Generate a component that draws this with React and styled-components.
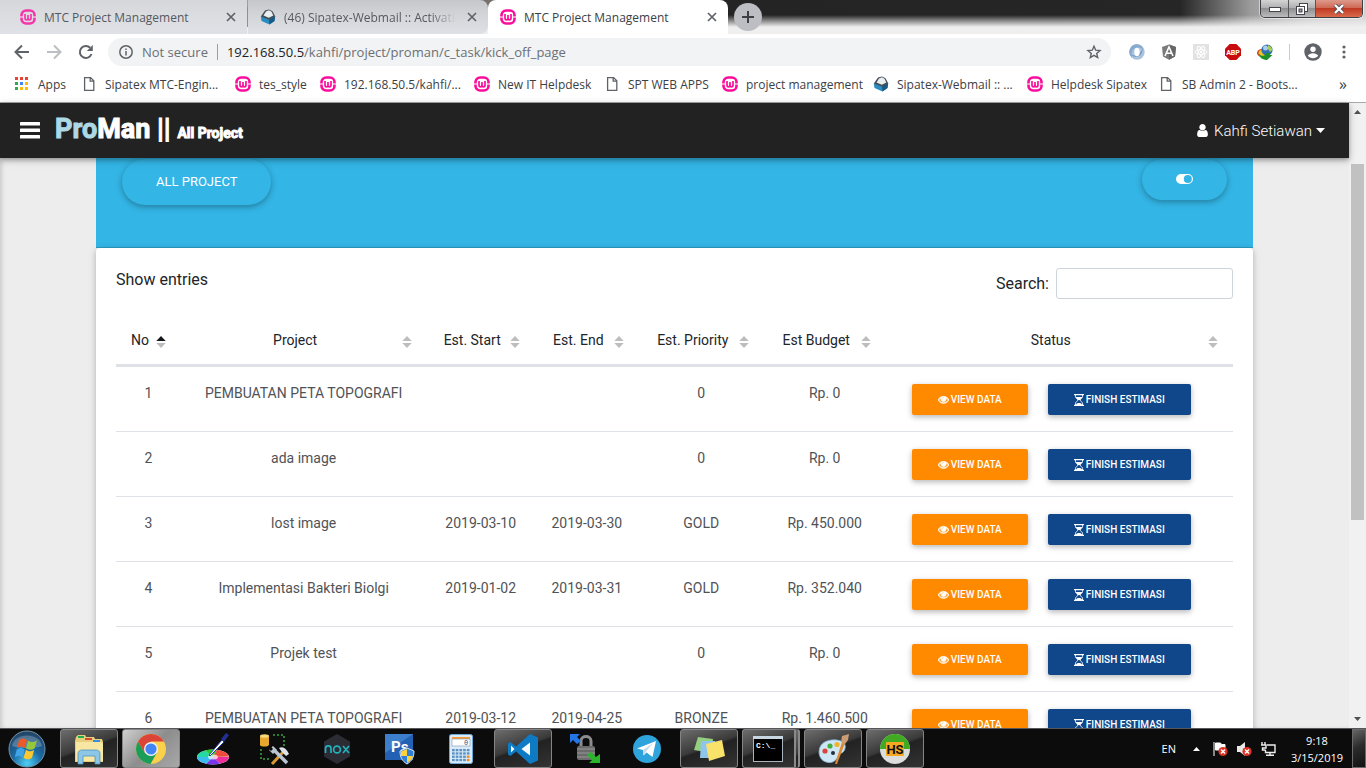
import React from "react";
import styled, { createGlobalStyle, css } from "styled-components";

const GlobalStyle = createGlobalStyle`
  * { box-sizing: border-box; }
  html, body, #root { height: 100%; }
  body { margin: 0; overflow: hidden; font-family: Roboto, sans-serif; }
  button { font-family: inherit; border: 0; margin: 0; padding: 0; background: none; color: inherit; }
  a { color: inherit; text-decoration: none; }
  svg { display: block; flex: none; }
`;

const Desktop = styled.div`
  height: 100vh;
  display: flex;
  flex-direction: column;
  overflow: hidden;
  background: #fff;
`;

/* ---------- Browser chrome ---------- */

const Chrome = styled.header`
  flex: none;
  font-family: "Open Sans", sans-serif;
  font-size: 12px;
  border-bottom: 1px solid #a9a9ab;
`;

const TabStrip = styled.div`
  display: flex;
  height: 34px;
  background:
    linear-gradient(to bottom, transparent 15px, rgba(240, 240, 240, 0.6) 22px, #efefef 27px),
    linear-gradient(to right, #c9cacd 0, #77716c 486px, #242424 726px, #262626 1180px, #9a9a9a 1250px, #c8c8c8 1310px, #d2d2d2 100%);
`;

const Tab = styled.div`
  display: flex;
  align-items: center;
  flex: 0 1 240px;
  min-width: 0;
  gap: 8px;
  padding: 0 8px 0 12px;
  color: ${(p) => (p.$active ? "#3c4043" : "#55585d")};
  background: ${(p) =>
    p.$active ? "#fff" : "linear-gradient(#c6c7cb, #d5d6da 50%, #dfe0e5)"};
  border-radius: ${(p) => (p.$active ? "8px 8px 0 0" : "0 8px 8px 0")};
  ${(p) =>
    p.$first &&
    css`
      flex-basis: 247px;
      padding-left: 20px;
      border-radius: 0;
      background: linear-gradient(#d6d7da, #dcdde1 50%, #e0e1e6);
    `}
`;

const TabDivider = styled.span`
  flex: none;
  width: 1px;
  height: 20px;
  align-self: center;
  background: #8e9094;
`;

const TabTitle = styled.span`
  flex: 1;
  min-width: 0;
  overflow: hidden;
  white-space: nowrap;
  mask-image: ${(p) => (p.$fade ? "linear-gradient(to right, #000 85%, transparent)" : "none")};
`;

const IconButton = styled.button`
  flex: none;
  display: grid;
  place-items: center;
  width: ${(p) => p.$size || 16}px;
  height: ${(p) => p.$size || 16}px;
  color: ${(p) => p.$color || "#5f6368"};
`;

const NewTab = styled.button`
  flex: none;
  display: grid;
  place-items: center;
  width: 28px;
  height: 28px;
  margin: 3px 0 0 6px;
  border-radius: 50%;
  background: #bdbec3;
  color: #3c4043;
`;

const WindowControls = styled.div`
  display: flex;
  height: 18px;
  margin-left: auto;
  margin-right: 3px;
  border: 1px solid #3e3e45;
  border-top: 0;
  border-radius: 0 0 5px 5px;
  overflow: hidden;
  box-shadow: 0 0 0 1px rgba(255, 255, 255, 0.5);
`;

const WindowButton = styled.button`
  display: grid;
  place-items: center;
  width: ${(p) => (p.$close ? 47 : 27)}px;
  border-left: ${(p) => (p.$first ? "0" : "1px solid #55555c")};
  background: ${(p) =>
    p.$close
      ? "linear-gradient(#dd9a8c, #cf6a55 45%, #c03a22 50%, #d96a4a)"
      : "linear-gradient(#d4d4d4, #b0b0b2 45%, #8f8f92 50%, #bcbcbe)"};
`;

const Toolbar = styled.div`
  display: flex;
  align-items: center;
  height: 36px;
  padding: 0 14px;
  background: #fff;
`;

const NavButtons = styled.div`
  display: flex;
  gap: 16px;
  margin-right: 14px;
`;

const AddressBar = styled.form`
  flex: 1;
  display: flex;
  align-items: center;
  height: 28px;
  padding: 0 9px 0 11px;
  border-radius: 14px;
  background: #f1f3f4;
  font-size: 13px;
  color: #6b6f74;
`;

const Secure = styled.span`
  padding: 0 9px;
  margin-right: 9px;
  border-right: 1px solid #9a9da1;
  line-height: 16px;
`;

const Url = styled.span`
  flex: 1;
  white-space: nowrap;
  b { font-weight: 400; color: #202124; }
`;

const Extensions = styled.div`
  display: flex;
  align-items: center;
  gap: 16px;
  margin-left: 18px;
`;

const ToolDivider = styled.span`
  width: 1px;
  height: 16px;
  background: #c9cbce;
`;

const Trailing = styled.div`
  display: flex;
  align-items: center;
  gap: 14px;
  margin-left: 16px;
`;

const Bookmarks = styled.nav`
  display: flex;
  align-items: center;
  height: 32px;
  padding: 0 19px 4px 14px;
  background: #fff;
  color: #3c4043;
`;

const Bookmark = styled.a`
  flex: 0 1 ${(p) => p.$width}px;
  display: flex;
  align-items: center;
  gap: 8px;
  white-space: nowrap;
`;

const Overflow = styled.button`
  margin-left: auto;
  font-size: 16px;
  line-height: 16px;
  color: #3c4043;
`;

/* ---------- Web page ---------- */

const Viewport = styled.div`
  flex: 1;
  min-height: 0;
  display: flex;
`;

const Page = styled.div`
  flex: 1;
  min-width: 0;
  display: flex;
  flex-direction: column;
  background: #ededed;
  color: #212529;
`;

const Navbar = styled.nav`
  flex: none;
  display: flex;
  align-items: center;
  height: 55px;
  padding: 0 24px 0 20px;
  background: #222;
  color: #fff;
  z-index: 1;
  box-shadow: 0 2px 5px rgba(0, 0, 0, 0.3), 0 2px 10px rgba(0, 0, 0, 0.12);
`;

const Brand = styled.a`
  margin-left: 15px;
  font-family: Impact, Roboto, sans-serif;
  font-weight: 700;
  font-size: 27px;
  line-height: 36px;
  -webkit-text-stroke: 1px currentColor;
  span { color: #add8e6; }
  small { font-size: 14px; }
`;

const UserMenu = styled.button`
  display: flex;
  align-items: center;
  gap: 4px;
  margin-left: auto;
  font-size: 15px;
  font-weight: 300;
`;

const Scroller = styled.main`
  flex: 1;
  min-height: 0;
  overflow: hidden;
  padding: 0 96px;
  box-shadow: inset 3px 0 4px -1px rgba(0, 0, 0, 0.15);
`;

const Hero = styled.section`
  display: flex;
  justify-content: space-between;
  align-items: flex-start;
  height: 90px;
  padding: 1px 26px;
  background: #33b5e5;
  border-bottom: 1px solid #2b9ac3;
`;

const Pill = styled.button`
  display: grid;
  place-items: center;
  height: ${(p) => (p.$small ? 41 : 46)}px;
  padding: 0 34px 2px;
  border-radius: 24px;
  color: #fff;
  font-size: 13px;
  text-transform: uppercase;
  box-shadow: 0 2px 5px rgba(0, 0, 0, 0.2), 0 2px 8px rgba(0, 0, 0, 0.12);
`;

const Card = styled.section`
  padding: 20px;
  background: #fff;
  border-radius: 4px;
  box-shadow: 0 2px 5px rgba(0, 0, 0, 0.16), 0 2px 10px rgba(0, 0, 0, 0.12);
`;

const Controls = styled.div`
  display: flex;
  justify-content: space-between;
  font-size: 16px;
  line-height: 24px;
`;

const SearchLabel = styled.label`
  display: flex;
  align-items: center;
  gap: 7px;
`;

const SearchInput = styled.input`
  width: 177px;
  height: 31px;
  padding: 4px 8px;
  border: 1px solid #ced4da;
  border-radius: 3px;
  font: 400 14px Roboto, sans-serif;
`;

const DataTable = styled.table`
  width: 100%;
  margin-top: 15px;
  table-layout: fixed;
  border-collapse: separate;
  border-spacing: 0;
  font-size: 14px;
  line-height: 20px;
  text-align: center;
`;

const HeadCell = styled.th`
  width: ${(p) => p.$width};
  height: 53px;
  padding: 1px 15px 0 12px;
  border-bottom: 3px solid #dee2e6;
  font-weight: 400;
`;

const SortButton = styled.button`
  width: 100%;
  display: grid;
  grid-template-columns: 1fr auto;
  align-items: center;
  gap: 4px;
  font-size: 14px;
  line-height: 20px;
  white-space: nowrap;

  svg { margin-top: 4px; }
`;

const Cell = styled.td`
  height: 65px;
  padding: 16px 0;
  vertical-align: top;
  border-bottom: 1px solid #dee2e6;
  color: #505356;
  white-space: nowrap;
`;

const Actions = styled.div`
  display: flex;
  justify-content: center;
  gap: 20px;
  padding: 1px 16px 0 0;
`;

const ActionButton = styled.button`
  display: flex;
  align-items: center;
  justify-content: center;
  gap: 2px;
  min-width: ${(p) => (p.$primary ? 143 : 116)}px;
  height: 31px;
  border-radius: 2px;
  background: ${(p) => (p.$primary ? "#10478a" : "#ff8a00")};
  color: #fff;
  font-size: 10px;
  font-weight: 500;
  text-transform: uppercase;
  box-shadow: 0 2px 5px rgba(0, 0, 0, 0.2), 0 2px 8px rgba(0, 0, 0, 0.1);
`;

const Scrollbar = styled.div`
  flex: none;
  display: flex;
  flex-direction: column;
  align-items: center;
  width: 17px;
  background: #f1f1f1;
  padding: 7px 0;
`;

const Thumb = styled.span`
  width: 13px;
  flex: 0 1 356px;
  margin: 50px 2px auto;
  background: #c1c1c1;
`;

/* ---------- Taskbar ---------- */

const Taskbar = styled.footer`
  flex: none;
  display: flex;
  align-items: stretch;
  height: 40px;
  border-top: 1px solid #55575a;
  background: #0c0c0c;
  color: #fff;
  font-family: "Open Sans", sans-serif;
  font-size: 12px;
  z-index: 2;
`;

const StartButton = styled.button`
  width: 54px;
  display: grid;
  place-items: center;
  margin-right: 6px;
`;

const TaskList = styled.div`
  display: flex;
  gap: 4px;
`;

const TaskButton = styled.button`
  display: grid;
  place-items: center;
  width: 58px;
  border-radius: 3px;
  border: 1px solid ${(p) => (p.$open ? "#858585" : "transparent")};
  background: ${(p) =>
    p.$front
      ? "linear-gradient(135deg, #d0d0d0, #8d8d8d 50%, #a8a8a8)"
      : p.$open
      ? "linear-gradient(160deg, #6d6d6d, #3a3a3a 45%, #222 50%, #333)"
      : "none"};
  ${(p) => p.$stack && css`
    padding-right: 2px;
    border-right: 6px double #8a8a8a;
  `}
`;

const Tray = styled.div`
  display: flex;
  align-items: center;
  margin-left: auto;
  gap: 8px;
`;

const Language = styled.span`
  margin-right: 4px;
  font-size: 11px;
  line-height: 16px;
`;

const Clock = styled.time`
  width: 54px;
  margin-left: 6px;
  text-align: center;
  font-size: 11px;
  line-height: 17px;
`;

const ShowDesktop = styled.button`
  align-self: stretch;
  width: 14px;
  border: 1px solid #6a6a6a;
  background: linear-gradient(150deg, #666, #2c2c2c 45%, #111);
`;

/* ---------- Icons ---------- */

const WIcon = ({ dim }) => (
  <svg width="16" height="16" viewBox="0 0 16 16" fill="none" opacity={dim ? 0.8 : 1}>
    <rect x="1.500" y="1.500" width="13" height="13" rx="4.600" stroke="#fb0d9c" strokeWidth="2.600" />
    <path d="M0 8h3.400M12.600 8H16" stroke="#fff" strokeWidth="1" />
    <path d="M5 5v4c0 2.400 3 2.400 3 0V6v3c0 2.400 3 2.400 3 0V5" stroke="#fb0d9c" strokeWidth="1.700" />
  </svg>
);

const MailIcon = () => (
  <svg width="16" height="16" viewBox="0 0 16 16">
    <path d="M.8 7.500L8 6l7.200 1.500L14.500 12l-5 3.600L1.500 12z" fill="#2b8cc2" />
    <path d="M9 10.500l6.200-3.500-.7 5-5 3.600z" fill="#175a85" />
    <path d="M.8 7.500L5 1.500 9 .4l3.500 1.800 2.700 5-6 3.600z" fill="#454f57" />
    <path d="M3.500 6.500L6 2.500 9 1.300l2.500 1.500 1.800 3.700-4.500 2.300z" fill="#e8eef2" />
  </svg>
);

const FileIcon = () => (
  <svg width="16" height="16" viewBox="0 0 16 16" fill="none" stroke="#5f6368" strokeWidth="1.300">
    <path d="M3.600 1.600h6l3.200 3.200v9.600H3.600zM9.200 1.600v3.600h3.600" />
  </svg>
);

const AppsIcon = () => {
  const colors = ["#ea4335", "#ea4335", "#ea4335", "#34a853", "#4285f4", "#fbbc05", "#34a853", "#fbbc05", "#fbbc05"];
  return (
    <svg width="16" height="16" viewBox="0 0 16 16">
      {colors.map((c, i) => (
        <rect key={i} x={1 + (i % 3) * 5} y={1 + Math.floor(i / 3) * 5} width="3" height="3" fill={c} />
      ))}
    </svg>
  );
};

const Stroke = ({ d, size = 16, width = 2 }) => (
  <svg width={size} height={size} viewBox="0 0 16 16" fill="none" stroke="currentColor" strokeWidth={width}>
    <path d={d} />
  </svg>
);

const Reload = () => (
  <svg width="16" height="16" viewBox="0 0 16 16" fill="none">
    <path d="M13.500 10A6 6 0 1 1 12.200 3.800" stroke="currentColor" strokeWidth="2" />
    <path d="M14.800 1v6H8.800z" fill="currentColor" />
  </svg>
);

const InfoIcon = () => (
  <svg width="14" height="14" viewBox="0 0 14 14" fill="none" stroke="#5f6368" strokeWidth="1.500">
    <circle cx="7" cy="7" r="6.200" />
    <path d="M7 6v4.500M7 3.400v1.500" />
  </svg>
);

const Star = () => (
  <svg width="16" height="16" viewBox="0 0 16 16" fill="none" stroke="currentColor" strokeWidth="1.400">
    <path d="M8 2.200l1.700 4 4.300.4-3.300 2.800 1 4.200L8 11.400l-3.700 2.200 1-4.200L2 6.600l4.300-.4z" />
  </svg>
);

const Swirl = () => (
  <svg width="16" height="16" viewBox="0 0 16 16">
    <circle cx="8" cy="8" r="7.700" fill="#a9c3dd" />
    <path d="M8 .3A7.700 7.700 0 0 0 3 13.800C1.500 8 4 3.500 9 3.500c3 0 4.500 1 5.500 2.500A7.700 7.700 0 0 0 8 .3z" fill="#86a9cd" />
    <path d="M13 2.200c1.500 6-1 10.500-6 10.500-3 0-4.500-1-5.500-2.500A7.700 7.700 0 0 0 13 2.200z" fill="#5f8ab9" opacity=".75" />
    <ellipse cx="8" cy="8" rx="2.700" ry="4.300" fill="#fff" />
  </svg>
);

const Angular = () => (
  <svg width="16" height="16" viewBox="0 0 16 16">
    <path d="M8 .5l7 2.500-1 9.500-6 3.300-6-3.300L1 3z" fill="#7b7b7b" />
    <path d="M8 .5l7 2.500-1 9.500-6 3.300z" fill="#666" />
    <path d="M4 12L8 3l4 9M5.500 9.200h5" stroke="#fff" strokeWidth="1.600" fill="none" />
  </svg>
);

const ReactLogo = () => (
  <svg width="16" height="16" viewBox="0 0 16 16" fill="none">
    <rect width="16" height="16" fill="#e2e2e2" />
    <g stroke="#fff">
      <ellipse cx="8" cy="8" rx="6" ry="2.400" />
      <ellipse cx="8" cy="8" rx="6" ry="2.400" transform="rotate(60 8 8)" />
      <ellipse cx="8" cy="8" rx="6" ry="2.400" transform="rotate(120 8 8)" />
    </g>
    <circle cx="8" cy="8" r="1.200" fill="#fff" />
  </svg>
);

const Abp = () => (
  <svg width="16" height="16" viewBox="0 0 16 16">
    <path d="M4.700 0h6.600L16 4.700v6.600L11.300 16H4.700L0 11.300V4.700z" fill="#c70d0d" />
    <text x="8" y="10.600" fontSize="7" fontWeight="700" fontFamily="Roboto, sans-serif" fill="#fff" textAnchor="middle">ABP</text>
  </svg>
);

const Idm = () => (
  <svg width="16" height="16" viewBox="0 0 16 16">
    <ellipse cx="5" cy="9" rx="5" ry="4" fill="#cf3a1f" />
    <ellipse cx="6" cy="9" rx="4.500" ry="3.300" fill="#f0c52a" />
    <circle cx="10" cy="6" r="5.600" fill="#2f6fb5" />
    <circle cx="8.500" cy="4" r="2.500" fill="#a8cdee" />
    <path d="M11 1l3 2 1.500 3-2.500 2-2-3z" fill="#a9cf55" />
    <path d="M1.500 9c2 3 5 3.500 7 2V9h4v2h3l-5.500 5c-4 0-7.500-2-8.500-7z" fill="#1d9128" />
  </svg>
);

const Avatar = () => (
  <svg width="18" height="18" viewBox="0 0 18 18">
    <circle cx="9" cy="9" r="8.700" fill="#5f6368" />
    <circle cx="9" cy="6.300" r="2.700" fill="#fff" />
    <path d="M3.800 12.800c1.500-3.400 8.900-3.400 10.400 0-2.400 3.300-8 3.300-10.400 0z" fill="#fff" />
  </svg>
);

const Dots = () => (
  <svg width="16" height="16" viewBox="0 0 16 16" fill="#5f6368">
    <circle cx="8" cy="3" r="1.600" /><circle cx="8" cy="8" r="1.600" /><circle cx="8" cy="13" r="1.600" />
  </svg>
);

const Bars = () => (
  <svg width="20" height="17" viewBox="0 0 20 17" fill="#fff">
    <rect y="0" width="20" height="3.500" rx=".5" /><rect y="6.500" width="20" height="3.500" rx=".5" /><rect y="13" width="20" height="3.500" rx=".5" />
  </svg>
);

const UserIcon = () => (
  <svg width="15" height="15" viewBox="0 0 1792 1792" fill="currentColor">
    <path d="M1536 1399q0 109-62.500 187t-150.500 78h-854q-88 0-150.500-78t-62.500-187q0-85 8.500-160.500t31.500-152 58.500-131 94-89 134.500-34.500q131 128 313 128t313-128q76 0 134.500 34.500t94 89 58.500 131 31.500 152 8.500 160.500zm-256-887q0 159-112.500 271.500t-271.500 112.500-271.500-112.500-112.500-271.500 112.500-271.500 271.500-112.500 271.500 112.500 112.500 271.500z" />
  </svg>
);

const Caret = () => (
  <svg width="9" height="5" viewBox="0 0 9 5" fill="currentColor"><path d="M0 0h9L4.500 5z" /></svg>
);

const ToggleIcon = () => (
  <svg width="17" height="10" viewBox="0 0 17 10">
    <path fillRule="evenodd" fill="#fff" d="M5 0h7a5 5 0 0 1 0 10H5A5 5 0 0 1 5 0zM11.800 1a4 4 0 1 0 0 8 4 4 0 0 0 0-8z" />
  </svg>
);

const EyeIcon = () => (
  <svg width="11" height="11" viewBox="0 0 1792 1792" fill="currentColor" stroke="currentColor" strokeWidth="90">
    <path d="M1664 960q-152-236-381-353 61 104 61 225 0 185-131.500 316.500t-316.500 131.500-316.500-131.500-131.500-316.500q0-121 61-225-229 117-381 353 133 205 333.500 326.500t434.500 121.500 434.500-121.500 333.500-326.500zm-720-384q0-20-14-34t-34-14q-125 0-214.500 89.500t-89.500 214.500q0 20 14 34t34 14 34-14 14-34q0-86 61-147t147-61q20 0 34-14t14-34zm848 384q0 34-20 69-140 230-376.500 368.500t-499.500 138.500-499.500-139-376.500-368q-20-35-20-69t20-69q140-229 376.500-368t499.500-139 499.500 139 376.500 368q20 35 20 69z" />
  </svg>
);

const HourglassIcon = () => (
  <svg width="10" height="12" viewBox="0 0 10 12">
    <path d="M0 0h10v1.300H0zM0 10.700h10V12H0z" fill="#fff" />
    <path d="M1.500 1v1.500C1.500 4.500 4 5 4 6s-2.500 1.500-2.500 3.500V11M8.500 1v1.500C8.500 4.500 6 5 6 6s2.500 1.500 2.500 3.500V11" fill="none" stroke="#fff" strokeWidth=".9" />
    <path d="M1.500 3h7L6 6H4z" fill="#fff" />
    <path d="M2 11c0-1.500 1.500-2 3-2s3 .5 3 2z" fill="#fff" />
  </svg>
);

const SortIcon = ({ up }) => (
  <svg width="10" height="12" viewBox="0 0 10 12">
    <path d="M5 0l4.700 5H.3z" fill={up ? "#15181b" : "#bdbdbd"} />
    <path d="M5 12l4.700-5H.3z" fill="#bdbdbd" />
  </svg>
);

const Art = ({ children }) => (
  <svg width="32" height="32" viewBox="0 0 32 32">{children}</svg>
);

const StartOrb = () => (
  <svg width="38" height="38" viewBox="0 0 38 38">
    <defs>
      <radialGradient id="orb" cx=".5" cy=".9" r=".9">
        <stop offset="0" stopColor="#4fd0f5" /><stop offset=".45" stopColor="#1b6ba5" /><stop offset="1" stopColor="#23415f" />
      </radialGradient>
    </defs>
    <circle cx="19" cy="19" r="18" fill="url(#orb)" stroke="#7394ac" strokeWidth="1" />
    <path d="M4 16C6 2 32 2 34 16c-9 3-21 3-30 0z" fill="#fff" opacity=".22" />
    <path d="M11 10c3-2 5-2 8 0l-2 8c-3-2-5-2-8 0z" fill="#ea5a2a" />
    <path d="M20 10.500c3 2 5 2 9 0l-2.500 8c-3 2-5 1.500-8.500-.3z" fill="#93c83e" />
    <path d="M8.700 19.500c3-2 5-2 8 0l-2 8c-3-2-5-2-8 0z" fill="#3fa4e6" />
    <path d="M18 19.700c3 2 5 2 8.200 0l-2.200 8c-3 2-5 2-8.500 0z" fill="#fbc832" />
  </svg>
);

const Explorer = () => (
  <Art>
    <path d="M3 4l2-2h7l1 2h8l1 2h7l1 3v20H2V8z" fill="#e8cf7d" />
    <path d="M5 3h6v2H5z" fill="#1fae4a" /><path d="M12 5h7v2h-7z" fill="#d5482e" /><path d="M20 7h7v2h-7z" fill="#3b8fd6" />
    <path d="M3 9h25l2 2v17H3z" fill="#f7e7a3" />
    <path d="M5 31V21c0-3 2-4 4-4h14c2 0 4 1 4 4v10h-5v-8H10v8z" fill="#8cc7e8" stroke="#4c93bd" strokeWidth=".8" />
  </Art>
);

const ChromeIcon = () => (
  <Art>
    <circle cx="16" cy="16" r="15" fill="#fbd04b" />
    <path d="M3 8.500A15 15 0 0 0 15.500 31L22 19.500 16 16 9.500 19.500z" fill="#1a9d59" />
    <path d="M3 8.500A15 15 0 0 1 29 8.500H16L9.500 19.500z" fill="#db4437" />
    <circle cx="16" cy="16" r="7" fill="#f1f1f1" /><circle cx="16" cy="16" r="5.600" fill="#4285f4" />
  </Art>
);

const ColorWheel = () => (
  <Art>
    <ellipse cx="16" cy="24" rx="16" ry="7.500" fill="#e8e8e8" />
    <path d="M16 24L0 24A16 7.500 0 0 1 8 17.500z" fill="#25d9a0" /><path d="M16 24L8 17.500a16 7.500 0 0 1 12-.7z" fill="#28c928" />
    <path d="M16 24l4-7.200a16 7.500 0 0 1 12 6.700z" fill="#ef4b3c" /><path d="M16 24l16 0a16 7.500 0 0 1-9 6.600z" fill="#ee2f9b" />
    <path d="M16 24l7 6.600a16 7.500 0 0 1-14 .1z" fill="#7a35e8" /><path d="M16 24l-7 6.600A16 7.500 0 0 1 0 24z" fill="#39bdf1" />
    <ellipse cx="16" cy="24" rx="5" ry="2.500" fill="#fff" opacity=".7" />
    <path d="M12 22L25 7l2 2-14 14z" fill="#fff" stroke="#203a9c" strokeWidth="1" />
    <path d="M24 6l5-6 3 2-5 7z" fill="#23308f" />
  </Art>
);

const DbTools = () => (
  <Art>
    <path d="M1 3v9c0 2 9 2 9 0V3z" fill="#e5a72d" /><ellipse cx="5.500" cy="3" rx="4.500" ry="1.800" fill="#f7d878" />
    <path d="M14 2h11v12M2 16v10h10" fill="none" stroke="#37a13f" strokeWidth="1.600" strokeDasharray="2 2" />
    <path d="M13 31l13-14" stroke="#d99a36" strokeWidth="3" /><path d="M13 15l15 15" stroke="#b9c6d1" strokeWidth="3.500" />
    <path d="M20 15c4-2 7 0 10 6l-3 2-4-4z" fill="#dce4ea" /><path d="M10 17l4-4 4 4-4 4z" fill="#b9c6d1" /><path d="M9 13l4 4" stroke="#0c0c0c" strokeWidth="3" />
  </Art>
);

const Nox = () => (
  <Art>
    <path d="M16 1l13 7.500v15L16 31 3 23.500v-15z" fill="#2b2c34" />
    <path d="M4.500 20v-4.500c0-3.500 5.500-3.500 5.500 0V20M22 13l6 7M28 13l-6 7" fill="none" stroke="#22b1bd" strokeWidth="1.700" />
    <circle cx="16" cy="16.500" r="3.400" fill="none" stroke="#22b1bd" strokeWidth="1.700" />
  </Art>
);

const Photoshop = () => (
  <Art>
    <rect x="2" y="1" width="28" height="26" fill="#2361b4" /><path d="M2 1h28L2 20z" fill="#3d7fcc" />
    <text x="8" y="19" fontSize="15" fontWeight="700" fontFamily="Roboto, sans-serif" fill="#fff">Ps</text>
    <path d="M24 15l7 3c0 6-2 10-7 13-5-3-7-7-7-13z" fill="#2f7ed8" stroke="#dfe5ec" strokeWidth="1" />
    <path d="M24 16v7h6c-1 3-3 5-6 7v-7h-6v-4.500z" fill="#fcd13d" />
  </Art>
);

const Calculator = () => (
  <Art>
    <rect x="4.500" y="1.500" width="23" height="29" rx="2" fill="#d9ebf8" stroke="#6da6d2" />
    <rect x="7" y="4" width="18" height="2" fill="#f59b3a" /><rect x="7" y="6" width="18" height="7" fill="#fff" stroke="#7b98b0" strokeWidth=".6" />
    <text x="19" y="12" fontSize="7" fontFamily="Liberation Mono, monospace" fill="#24507a">0</text>
    {[0, 1, 2, 3].map((r) => [0, 1, 2, 3, 4].map((c) => (
      <rect key={r + "-" + c} x={7 + c * 3.7} y={16 + r * 3.3} width="2.700" height="2.300" fill={c === 4 && r > 1 ? "#f08b1d" : "#5c93c4"} />
    )))}
  </Art>
);

const VsCode = () => (
  <Art>
    <path d="M23 1l8 3.500v23L23 31 9 18.500 3.500 23 1 21.500v-11L3.500 9 9 13.500z" fill="#0e7ac4" />
    <path d="M23 9.500L14.500 16l8.500 6.500zM4 12.500v7L7.500 16z" fill="#f3f8fb" />
  </Art>
);

const LockSync = () => (
  <Art>
    <path d="M12 14V8c0-6 10-6 10 0v6" fill="none" stroke="#8c8c8c" strokeWidth="3" />
    <rect x="8" y="13" width="18" height="14" rx="2" fill="#6b6b6b" /><path d="M8 16h18M8 20h18M8 24h18" stroke="#999" />
    <path d="M1 1h10L8 4l4 4-4 3-4-4-3 3z" fill="#2476e5" />
    <path d="M31 30H20l3-3-5-5 4-3 5 5 4-3z" fill="#2bb52b" />
  </Art>
);

const Telegram = () => (
  <Art>
    <circle cx="16" cy="16" r="14" fill="#2fa3db" />
    <path d="M6 15.500L25 8l-3.500 16-6-4.500-3 3-.5-5.500z" fill="#fff" /><path d="M12 17l10-7-7 8.500-2.500 4z" fill="#c5daea" />
  </Art>
);

const StickyNotes = () => (
  <Art>
    <path d="M5 4l15 2-2 14-17-3z" fill="#93cf7e" /><path d="M8 8h14v17H7z" fill="#8fc5ec" /><path d="M13 11l16-4 3 16-16 5z" fill="#f8e26a" />
  </Art>
);

const Terminal = () => (
  <Art>
    <rect x="1.500" y="3.500" width="29" height="25" fill="#000" stroke="#a9b4be" /><rect x="1" y="3" width="30" height="3" fill="#c8d6e2" />
    <text x="4" y="15" fontSize="8" fontWeight="700" fontFamily="Liberation Mono, monospace" fill="#fff">C:\_</text>
  </Art>
);

const PaintIcon = () => (
  <Art>
    <path d="M2 19C2 9 12 6 20 7c8 1 10 6 7 11-2 3-5 2-6 5-1 5-7 8-12 6-4-1-7-5-7-10z" fill="#cfe6f5" stroke="#7fb0d0" strokeWidth=".8" />
    <circle cx="8" cy="18" r="2.600" fill="#d9453a" /><circle cx="13" cy="13" r="2.600" fill="#48ad3f" /><circle cx="20" cy="11.500" r="2.600" fill="#f0b32e" /><circle cx="16" cy="20" r="2" fill="#20303c" />
    <path d="M18 31l7-22 3 1-8 21z" fill="#dd8a33" /><path d="M24 9l1-6 7-2-1 6-3 4z" fill="#c99c74" />
  </Art>
);

const HsIcon = () => (
  <Art>
    <circle cx="16" cy="16" r="15" fill="#dcdedb" /><path d="M1 16a15 15 0 0 1 30 0z" fill="#3faa22" />
    <rect x="7" y="9" width="18" height="14" rx="1" fill="#f7a823" />
    <text x="16" y="21" fontSize="13" fontWeight="700" fontFamily="Roboto, sans-serif" fill="#111" textAnchor="middle">HS</text>
  </Art>
);

const RedCross = () => (
  <g>
    <circle cx="11" cy="10.500" r="4.600" fill="#dc3325" /><path d="M9 8.500l4 4M13 8.500l-4 4" stroke="#fff" strokeWidth="1.500" />
  </g>
);

const FlagIcon = () => (
  <svg width="16" height="16" viewBox="0 0 16 16"><path d="M2 1v14M3.500 2h5l1 1.500H13V9H3.500z" fill="#fff" stroke="#fff" strokeWidth="1" /><RedCross /></svg>
);

const SpeakerIcon = () => (
  <svg width="16" height="16" viewBox="0 0 16 16"><path d="M1 5h3l5-4v14l-5-4H1z" fill="#e9e9e9" /><RedCross /></svg>
);

const NetworkIcon = () => (
  <svg width="16" height="16" viewBox="0 0 16 16" fill="none" stroke="#eee" strokeWidth="1.400"><path d="M7 4h8v7.500H5.500V9M2 1v3M5 1v3M1 4h5v3H2.500v2h3M10 12v2M6 14.300h8" /></svg>
);

/* ---------- Data ---------- */

const bookmarks = [
  ["Apps", AppsIcon, 67],
  ["Sipatex MTC-Engin...", FileIcon, 154],
  ["tes_style", WIcon, 85],
  ["192.168.50.5/kahfi/...", WIcon, 154],
  ["New IT Helpdesk", WIcon, 130],
  ["SPT WEB APPS", FileIcon, 118],
  ["project management", WIcon, 151],
  ["Sipatex-Webmail :: ...", MailIcon, 154],
  ["Helpdesk Sipatex", WIcon, 131],
  ["SB Admin 2 - Boots...", FileIcon, 140],
];

const columns = [
  ["No", "5.8%"],
  ["Project", "22%"],
  ["Est. Start", "9.7%"],
  ["Est. End", "9.3%"],
  ["Est. Priority", "11.2%"],
  ["Est Budget", "10.9%"],
  ["Status", "31.1%"],
];

const rows = [
  ["1", "PEMBUATAN PETA TOPOGRAFI", "", "", "0", "Rp. 0"],
  ["2", "ada image", "", "", "0", "Rp. 0"],
  ["3", "lost image", "2019-03-10", "2019-03-30", "GOLD", "Rp. 450.000"],
  ["4", "Implementasi Bakteri Biolgi", "2019-01-02", "2019-03-31", "GOLD", "Rp. 352.040"],
  ["5", "Projek test", "", "", "0", "Rp. 0"],
  ["6", "PEMBUATAN PETA TOPOGRAFI", "2019-03-12", "2019-04-25", "BRONZE", "Rp. 1.460.500"],
];

const tasks = [
  ["Explorer", Explorer, "open"],
  ["Chrome", ChromeIcon, "front"],
  ["Color picker", ColorWheel],
  ["Database tools", DbTools],
  ["Nox", Nox],
  ["Photoshop", Photoshop],
  ["Calculator", Calculator],
  ["Code", VsCode, "open"],
  ["Sync", LockSync],
  ["Telegram", Telegram],
  ["Sticky Notes", StickyNotes, "open"],
  ["Command Prompt", Terminal, "stack"],
  ["Paint", PaintIcon, "open"],
  ["HS", HsIcon, "open"],
];

const CLOSE = "M4 4l8 8M12 4l-8 8";

function BrowserTab({ title, icon, active, first, fade }) {
  return (
    <Tab $active={active} $first={first}>
      {icon}
      <TabTitle $fade={fade}>{title}</TabTitle>
      <IconButton aria-label="Close tab"><Stroke d={CLOSE} width={1.7} /></IconButton>
    </Tab>
  );
}

function BrowserChrome() {
  return (
    <Chrome>
      <TabStrip>
        <BrowserTab first title="MTC Project Management" icon={<WIcon dim />} />
        <TabDivider />
        <BrowserTab fade title="(46) Sipatex-Webmail :: Activation" icon={<MailIcon />} />
        <BrowserTab active title="MTC Project Management" icon={<WIcon />} />
        <NewTab aria-label="New tab"><Stroke d="M8 2v12M2 8h12" /></NewTab>
        <WindowControls>
          <WindowButton $first aria-label="Minimize">
            <svg width="12" height="6" viewBox="0 0 12 6"><rect x=".5" y="1.500" width="11" height="4" fill="#fff" stroke="#44444c" /></svg>
          </WindowButton>
          <WindowButton aria-label="Restore">
            <svg width="12" height="12" viewBox="0 0 12 12" stroke="#44444c"><rect x="3.500" y=".5" width="8" height="8" fill="#fff" /><rect x=".5" y="3.500" width="8" height="8" fill="#fff" /><rect x="3" y="6" width="3" height="3" fill="#999" /></svg>
          </WindowButton>
          <WindowButton $close aria-label="Close">
            <svg width="12" height="10" viewBox="0 0 12 10"><path d="M2 1l8 8M10 1L2 9" stroke="#4b4b55" strokeWidth="4" /><path d="M2 1l8 8M10 1L2 9" stroke="#fff" strokeWidth="2.400" /></svg>
          </WindowButton>
        </WindowControls>
      </TabStrip>
      <Toolbar>
        <NavButtons>
          <IconButton aria-label="Back"><Stroke d="M15 8H2M8 1.500L1.500 8 8 14.500" /></IconButton>
          <IconButton $color="#bcbec1" aria-label="Forward"><Stroke d="M1 8h13M8 1.500L14.500 8 8 14.500" /></IconButton>
          <IconButton aria-label="Reload"><Reload /></IconButton>
        </NavButtons>
        <AddressBar>
          <InfoIcon />
          <Secure>Not secure</Secure>
          <Url><b>192.168.50.5</b>/kahfi/project/proman/c_task/kick_off_page</Url>
          <IconButton type="button" aria-label="Bookmark this page"><Star /></IconButton>
        </AddressBar>
        <Extensions><Swirl /><Angular /><ReactLogo /><Abp /><Idm /></Extensions>
        <Trailing>
          <ToolDivider />
          <IconButton $size={18} aria-label="Profile"><Avatar /></IconButton>
          <IconButton aria-label="Menu"><Dots /></IconButton>
        </Trailing>
      </Toolbar>
      <Bookmarks>
        {bookmarks.map(([label, Icon, width]) => (
          <Bookmark key={label} href="#" $width={width}><Icon />{label}</Bookmark>
        ))}
        <Overflow aria-label="More bookmarks">»</Overflow>
      </Bookmarks>
    </Chrome>
  );
}

function ProjectTable() {
  return (
    <DataTable>
      <thead>
        <tr>
          {columns.map(([label, width], i) => (
            <HeadCell key={label} $width={width} scope="col">
              <SortButton>{label}<SortIcon up={i === 0} /></SortButton>
            </HeadCell>
          ))}
        </tr>
      </thead>
      <tbody>
        {rows.map((row) => (
          <tr key={row[0]}>
            {row.map((value, i) => <Cell key={i}>{value}</Cell>)}
            <Cell>
              <Actions>
                <ActionButton><EyeIcon />View Data</ActionButton>
                <ActionButton $primary><HourglassIcon />Finish Estimasi</ActionButton>
              </Actions>
            </Cell>
          </tr>
        ))}
      </tbody>
    </DataTable>
  );
}

export default function App() {
  return (
    <Desktop>
      <GlobalStyle />
      <BrowserChrome />
      <Viewport>
        <Page>
          <Navbar>
            <IconButton $size={20} $color="#fff" aria-label="Toggle menu"><Bars /></IconButton>
            <Brand href="#"><span>Pro</span>Man || <small>All Project</small></Brand>
            <UserMenu><UserIcon />Kahfi Setiawan<Caret /></UserMenu>
          </Navbar>
          <Scroller>
            <Hero>
              <Pill>All Project</Pill>
              <Pill $small aria-label="Toggle view"><ToggleIcon /></Pill>
            </Hero>
            <Card>
              <Controls>
                <span>Show entries</span>
                <SearchLabel>Search:<SearchInput type="search" /></SearchLabel>
              </Controls>
              <ProjectTable />
            </Card>
          </Scroller>
        </Page>
        <Scrollbar>
          <svg width="7" height="4" viewBox="0 0 7 4"><path d="M0 4h7L3.500 0z" fill="#505050" /></svg>
          <Thumb />
          <svg width="7" height="4" viewBox="0 0 7 4"><path d="M0 0h7L3.500 4z" fill="#505050" /></svg>
        </Scrollbar>
      </Viewport>
      <Taskbar>
        <StartButton aria-label="Start"><StartOrb /></StartButton>
        <TaskList>
          {tasks.map(([label, Icon, state]) => (
            <TaskButton key={label} aria-label={label} $open={Boolean(state)} $front={state === "front"} $stack={state === "stack"}>
              <Icon />
            </TaskButton>
          ))}
        </TaskList>
        <Tray>
          <Language>EN</Language>
          <IconButton aria-label="Show hidden icons">
            <svg width="7" height="4" viewBox="0 0 7 4"><path d="M0 4h7L3.500 0z" fill="#fff" /></svg>
          </IconButton>
          <FlagIcon />
          <SpeakerIcon />
          <NetworkIcon />
          <Clock>9:18<br />3/15/2019</Clock>
          <ShowDesktop aria-label="Show desktop" />
        </Tray>
      </Taskbar>
    </Desktop>
  );
}
